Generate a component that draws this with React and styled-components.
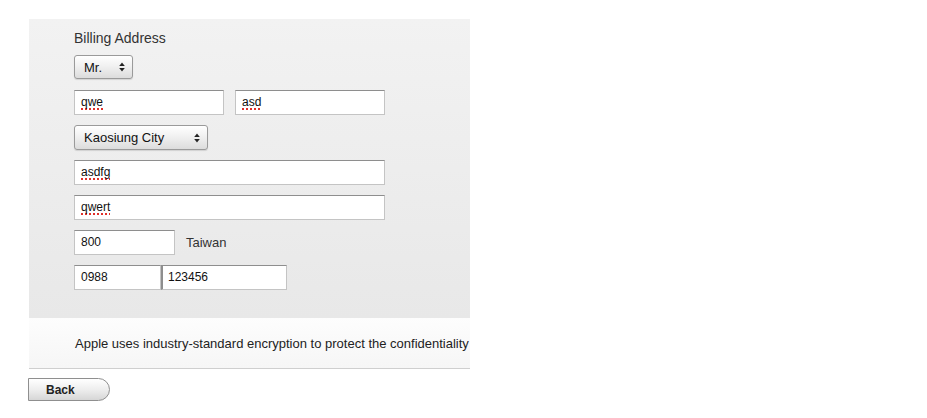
import React from "react";
import styled, { createGlobalStyle } from "styled-components";

const Global = createGlobalStyle`
  html, body { margin: 0; padding: 0; background: #fff; }
  body { font-family: "Liberation Sans", Arial, Helvetica, sans-serif; color: #333; }
`;

const Page = styled.div`
  padding: 19px 0 0 29px;
  width: 441px;
`;

const Panel = styled.div`
  width: 441px;
  overflow: hidden;
`;

const FormArea = styled.div`
  background: linear-gradient(to bottom, #f2f2f2 0%, #e8e8e8 100%);
  padding: 11px 0 28px 45px;
  display: flex;
  flex-direction: column;
  gap: 10px;
`;

const Heading = styled.div`
  font-size: 14px;
  line-height: 16px;
  color: #333;
  margin-bottom: -1px;
`;

const Row = styled.div`
  display: flex;
  align-items: center;
  gap: ${(p) => p.$gap ?? 10}px;
`;

const Field = styled.div`
  box-sizing: border-box;
  width: ${(p) => p.$w}px;
  height: 25px;
  background: #fff;
  border: 1px solid #c4c4c4;
  border-top-color: #8e8e8e;
  border-left-color: ${(p) => (p.$darkLeft ? "#8e8e8e" : "#c4c4c4")};
  border-left-width: ${(p) => (p.$darkLeft ? 2 : 1)}px;
  padding-left: ${(p) => (p.$darkLeft ? 5 : 6)}px;
  font-size: 12px;
  line-height: 23px;
  color: #111;
`;

const Misspelled = styled.span`
  text-decoration: underline dotted #e0302a;
  text-decoration-thickness: 2px;
  text-underline-offset: 2px;
`;

const Select = styled.div`
  box-sizing: border-box;
  width: ${(p) => p.$w}px;
  height: ${(p) => p.$h ?? 25}px;
  margin-bottom: ${(p) => p.$mb ?? 0}px;
  border: 1px solid #9a9a9a;
  border-radius: 3px;
  background: linear-gradient(to bottom, #ffffff 0%, #f1f1f1 45%, #dcdcdc 100%);
  box-shadow: 0 1px 1px rgba(0, 0, 0, 0.12);
  display: flex;
  align-items: center;
  justify-content: space-between;
  padding: 0 7px 0 9px;
  font-size: 13px;
  color: #111;
`;

const Arrows = () => (
  <svg width="6" height="10" viewBox="0 0 6 10">
    <path d="M3 0.5 L5.8 4 L0.2 4 Z" fill="#222" />
    <path d="M3 9.5 L5.8 6 L0.2 6 Z" fill="#222" />
  </svg>
);

const Plain = styled.span`
  font-size: 13px;
  color: #333;
`;

const Notice = styled.div`
  height: 50px;
  background: linear-gradient(to bottom, #fdfdfd 0%, #f6f6f6 100%);
  border-bottom: 1px solid #cfcfcf;
  padding-left: 46px;
  display: flex;
  align-items: center;
  white-space: nowrap;
  font-size: 13px;
  color: #222;
`;

const Footer = styled.div`
  padding-top: 9px;
  margin-left: -1px;
`;

const BackButton = styled.button`
  box-sizing: border-box;
  width: 82px;
  height: 23px;
  border: 1px solid #8f8f8f;
  border-radius: 0 12px 12px 0;
  background: linear-gradient(to bottom, #ffffff 0%, #eeeeee 50%, #d6d6d6 100%);
  font-family: "Liberation Sans", Arial, sans-serif;
  font-weight: bold;
  font-size: 12px;
  color: #222;
  text-align: left;
  padding: 0 0 0 17px;
  cursor: pointer;
`;

export default function App() {
  return (
    <>
      <Global />
      <Page>
        <Panel>
          <FormArea>
            <Heading>Billing Address</Heading>
            <Select $w={59} $h={24} $mb={1}>
              <span>Mr.</span>
              <Arrows />
            </Select>
            <Row $gap={11}>
              <Field $w={150}><Misspelled>qwe</Misspelled></Field>
              <Field $w={150}><Misspelled>asd</Misspelled></Field>
            </Row>
            <Select $w={134}>
              <span>Kaosiung City</span>
              <Arrows />
            </Select>
            <Field $w={311}><Misspelled>asdfg</Misspelled></Field>
            <Field $w={311}><Misspelled>qwert</Misspelled></Field>
            <Row $gap={11}>
              <Field $w={101}>800</Field>
              <Plain>Taiwan</Plain>
            </Row>
            <Row $gap={0}>
              <Field $w={87}>0988</Field>
              <Field $w={126} $darkLeft>123456</Field>
            </Row>
          </FormArea>
          <Notice>
            Apple uses industry-standard encryption to protect the confidentiality of your personal information.
          </Notice>
        </Panel>
        <Footer>
          <BackButton>Back</BackButton>
        </Footer>
      </Page>
    </>
  );
}
